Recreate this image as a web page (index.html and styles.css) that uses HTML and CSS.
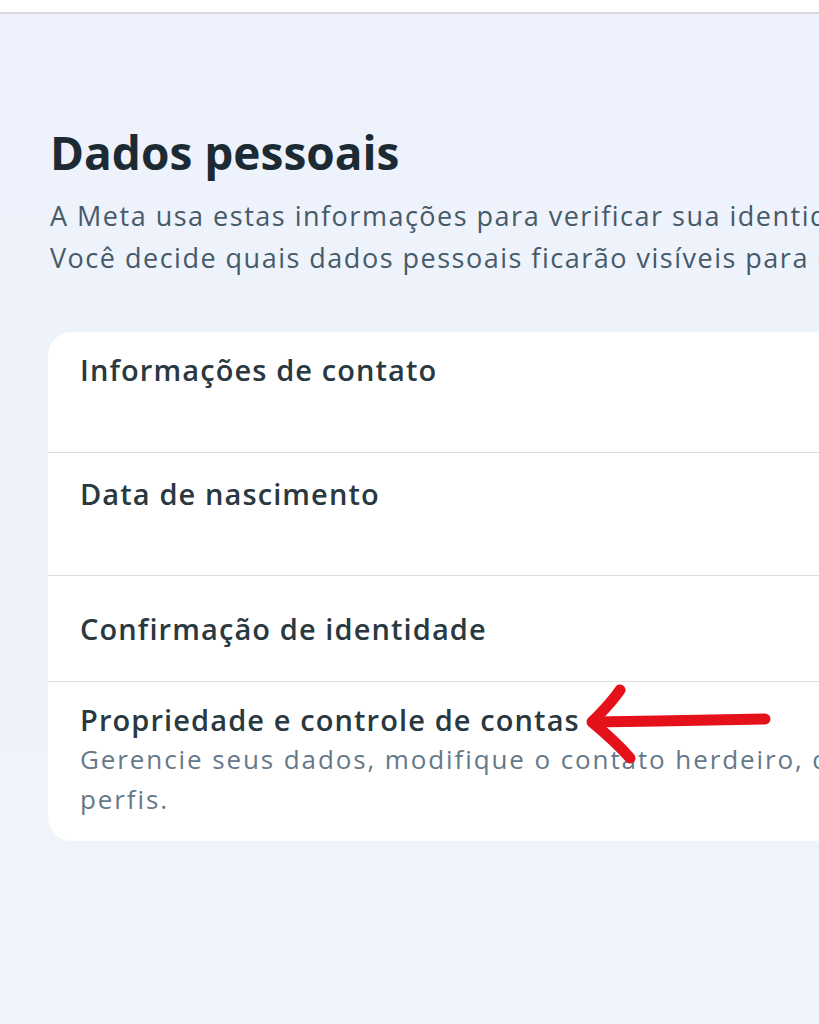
FILE: index.html
```html
<!DOCTYPE html>
<html lang="pt-BR">
<head>
    <meta charset="UTF-8">
    <meta name="viewport" content="width=device-width, initial-scale=1.0">
    <title>Dados pessoais</title>
    <link rel="stylesheet" href="styles.css">
</head>
<body>
    <div class="topbar"></div>

    <div class="page">
        <h1>Dados pessoais</h1>
        <p class="intro">
            A Meta usa estas informações para verificar sua identidade.<br>
            Você decide quais dados pessoais ficarão visíveis para outras pessoas.
        </p>

        <div class="card">
            <div class="row row-tall">
                <div class="row-title">Informações de contato</div>
            </div>
            <div class="row row-tall row-two">
                <div class="row-title">Data de nascimento</div>
            </div>
            <div class="row row-center">
                <div class="row-title">Confirmação de identidade</div>
            </div>
            <div class="row row-last">
                <div class="row-title">Propriedade e controle de contas</div>
                <div class="row-sub">Gerencie seus dados, modifique o contato herdeiro, desative ou exclua contas e<br>perfis.</div>
            </div>

            <!-- seta desenhada por cima da captura -->
            <svg class="arrow" width="210" height="90" viewBox="0 0 210 90">
                <path d="M195 39 C150 40 80 41 24 42" />
                <path d="M50 10 C42 22 32 32 22 42 C34 52 48 64 60 78" />
            </svg>
        </div>
    </div>
</body>
</html>
```

FILE: styles.css
```css
html, body {
    margin: 0;
    padding: 0;
}
body {
    font-family: "Open Sans", "Noto Sans", sans-serif;
    background: linear-gradient(180deg, #edf2fc 0%, #eef3fb 60%, #f1f4fa 100%);
    min-height: 1024px;
    overflow: hidden;
    color: #1c2b33;
}
.topbar {
    height: 12px;
    background: #ffffff;
    border-bottom: 2px solid #d6d8dc;
}
.page {
    width: 1400px;
    padding: 110px 0 0 50px;
}
h1 {
    margin: 0;
    font-size: 46px;
    font-weight: 700;
    line-height: 56px;
    color: #1c2b33;
}
.intro {
    margin: 15px 0 0 0;
    font-size: 27px;
    line-height: 42px;
    letter-spacing: 1.5px;
    white-space: nowrap;
    color: #465a69;
}
.card {
    position: relative;
    margin: 53px 0 0 -2px;
    background: #ffffff;
    border-radius: 24px;
    overflow: hidden;
}
.row {
    padding: 0 32px;
    border-bottom: 1px solid #dadde1;
    white-space: nowrap;
}
.row-tall {
    height: 121px;
    padding-top: 19px;
    box-sizing: border-box;
}
.row-two {
    height: 123px;
    padding-top: 22px;
}
.row-center {
    height: 105px;
    display: flex;
    align-items: center;
}
.row-last {
    border-bottom: none;
    padding-top: 19px;
    padding-bottom: 22px;
}
.row-title {
    font-size: 29px;
    font-weight: 600;
    line-height: 38px;
    letter-spacing: 1.1px;
    color: #2a3840;
}
.row-sub {
    font-size: 26px;
    line-height: 40px;
    letter-spacing: 1.9px;
    color: #65788a;
}
.arrow {
    position: absolute;
    left: 522px;
    top: 348px;
    fill: none;
    stroke: #e5111a;
    stroke-width: 11;
    stroke-linecap: round;
    stroke-linejoin: round;
}
```
